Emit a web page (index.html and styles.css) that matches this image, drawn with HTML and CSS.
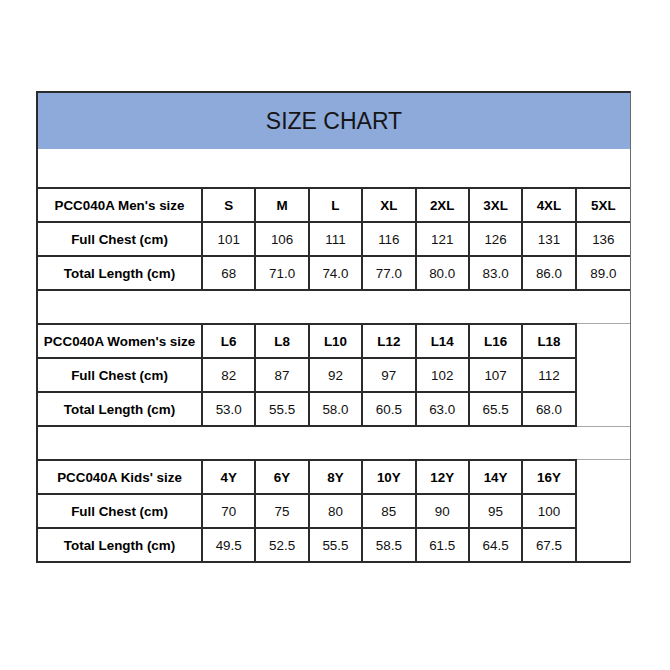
FILE: index.html
```html
<!DOCTYPE html>
<html>
<head>
<meta charset="utf-8">
<link rel="stylesheet" href="styles.css">
</head>
<body>
<div class="chart">
  <div class="title">SIZE CHART</div>
  <div class="blank first"></div>

  <div class="grid men">
    <div class="c b">PCC040A Men's size</div>
    <div class="c b">S</div><div class="c b">M</div><div class="c b">L</div><div class="c b">XL</div><div class="c b">2XL</div><div class="c b">3XL</div><div class="c b">4XL</div><div class="c b last">5XL</div>
    <div class="c b">Full Chest (cm)</div>
    <div class="c">101</div><div class="c">106</div><div class="c">111</div><div class="c">116</div><div class="c">121</div><div class="c">126</div><div class="c">131</div><div class="c last">136</div>
    <div class="c b">Total Length (cm)</div>
    <div class="c">68</div><div class="c">71.0</div><div class="c">74.0</div><div class="c">77.0</div><div class="c">80.0</div><div class="c">83.0</div><div class="c">86.0</div><div class="c last">89.0</div>
  </div>

  <div class="blank"></div>

  <div class="section">
    <div class="grid sub">
      <div class="c b">PCC040A Women's size</div>
      <div class="c b">L6</div><div class="c b">L8</div><div class="c b">L10</div><div class="c b">L12</div><div class="c b">L14</div><div class="c b">L16</div><div class="c b">L18</div>
      <div class="c b">Full Chest (cm)</div>
      <div class="c">82</div><div class="c">87</div><div class="c">92</div><div class="c">97</div><div class="c">102</div><div class="c">107</div><div class="c">112</div>
      <div class="c b">Total Length (cm)</div>
      <div class="c">53.0</div><div class="c">55.5</div><div class="c">58.0</div><div class="c">60.5</div><div class="c">63.0</div><div class="c">65.5</div><div class="c">68.0</div>
    </div>
    <div class="filler"></div>
  </div>

  <div class="blank"></div>

  <div class="section">
    <div class="grid sub">
      <div class="c b">PCC040A Kids' size</div>
      <div class="c b">4Y</div><div class="c b">6Y</div><div class="c b">8Y</div><div class="c b">10Y</div><div class="c b">12Y</div><div class="c b">14Y</div><div class="c b">16Y</div>
      <div class="c b">Full Chest (cm)</div>
      <div class="c">70</div><div class="c">75</div><div class="c">80</div><div class="c">85</div><div class="c">90</div><div class="c">95</div><div class="c">100</div>
      <div class="c b">Total Length (cm)</div>
      <div class="c">49.5</div><div class="c">52.5</div><div class="c">55.5</div><div class="c">58.5</div><div class="c">61.5</div><div class="c">64.5</div><div class="c">67.5</div>
    </div>
    <div class="filler bottom"></div>
  </div>
</div>
</body>
</html>
```

FILE: styles.css
```css
* { box-sizing: border-box; }

html, body {
  margin: 0;
  padding: 0;
  background: #ffffff;
}

body {
  font-family: "Liberation Sans", Arial, sans-serif;
  color: #111111;
}

.chart {
  margin: 91px 0 0 36px;
  width: 595px;
  border-top: 2px solid #2b2b2b;
  border-left: 2px solid #2b2b2b;
  border-right: 1px solid #6a6a6a;
}

.title {
  height: 56px;
  background: #8eaadb;
  display: flex;
  align-items: center;
  justify-content: center;
  font-size: 23px;
  color: #151515;
  padding-top: 1px;
}

.blank { height: 32px; }
.blank.first { height: 38px; }

.grid {
  display: grid;
  border-top: 2px solid #2b2b2b;
}

.men {
  grid-template-columns: 165px repeat(8, 1fr);
}

.sub {
  grid-template-columns: 165px repeat(7, 53.375px);
  flex: none;
}

.c {
  height: 34px;
  border-right: 2px solid #2b2b2b;
  border-bottom: 2px solid #2b2b2b;
  display: flex;
  align-items: center;
  justify-content: center;
  font-size: 13.4px;
  white-space: nowrap;
  color: #111111;
}

.c.b { font-weight: bold; color: #000000; }
.c.last { border-right: none; }

.section {
  display: flex;
}

.filler {
  flex: 1;
  border-top: 1px solid #a8a8a8;
  border-bottom: 1px solid #a8a8a8;
}

.filler.bottom {
  border-bottom: 2px solid #2b2b2b;
}
```
